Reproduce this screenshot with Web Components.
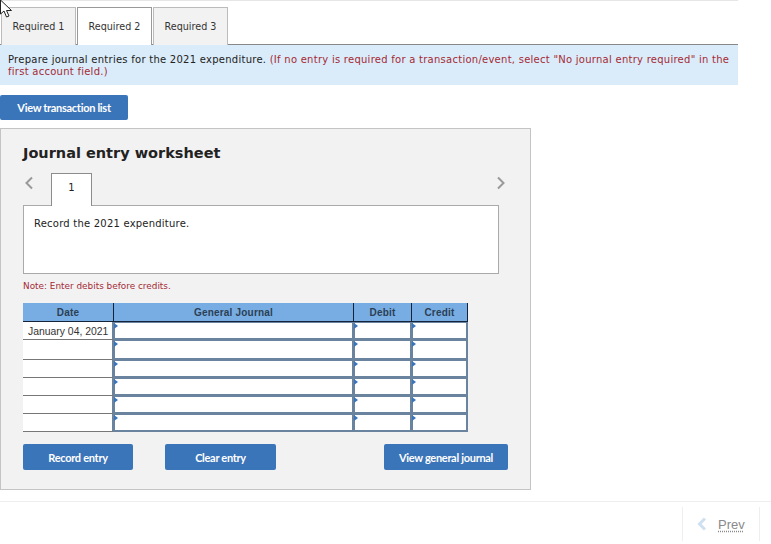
<!DOCTYPE html>
<html>
<head>
<meta charset="utf-8">
<style>
  html, body { margin: 0; background: #fff; }
  body { font-family: "DejaVu Sans", Verdana, sans-serif; font-size: 10px; color: #222; height: 544px; overflow: hidden; }
</style>
</head>
<body>
<homework-page></homework-page>

<script>
// Blue rounded action button
class ActionButton extends HTMLElement {
  connectedCallback() {
    this.attachShadow({ mode: 'open' }).innerHTML = `
      <style>
        :host { display: flex; align-items: center; justify-content: center; height: 26px; box-sizing: border-box;
          background: #3b75b9; border-radius: 2px; color: #fff; font: 700 11px Lato, sans-serif; letter-spacing: -.3px; }
      </style>
      <slot></slot>`;
  }
}
customElements.define('action-button', ActionButton);

// One of the Required tabs
class RequiredTab extends HTMLElement {
  connectedCallback() {
    this.attachShadow({ mode: 'open' }).innerHTML = `
      <style>
        :host { display: flex; align-items: center; justify-content: center; box-sizing: border-box; width: 75px; height: 38px;
          border: 1px solid #bbb; border-bottom: 0; background: #f2f2f2; color: #333; font-size: 9.6px; }
        :host([active]) { background: #fff; border-color: #999; }
      </style>
      <slot></slot>`;
  }
}
customElements.define('required-tab', RequiredTab);

class JournalTable extends HTMLElement {
  connectedCallback() {
    let cells = '';
    for (let i = 0; i < 6; i++) {
      cells += `<div class="date">${i == 0 ? 'January 04, 2021' : ''}</div>`;
      cells += '<div class="in"></div><div class="in"></div><div class="in"></div>';
    }
    this.attachShadow({ mode: 'open' }).innerHTML = `
      <style>
        :host { display: grid; grid-template-columns: 91px 240px 58px 56px; grid-template-rows: 19px 18px 20px 18px 18px 18px 18px; width: 445px;
          font: 10.4px "Liberation Sans", Arial, sans-serif; color: #333; }
        .head { box-sizing: border-box; background: #78ade3; border-bottom: 1px solid #16243a; border-right: 1px solid #16243a;
          display: flex; align-items: center; justify-content: center; font-weight: 700; font-size: 10px; color: #2b3f55; letter-spacing: .2px; }
        .date { background: #fff; border-bottom: 1px solid #777; border-right: 2px solid #6a84a0; box-sizing: border-box;
          display: flex; align-items: center; padding: 1px 0 0 5px; white-space: nowrap; }
        .in { position: relative; background: #fff; box-sizing: border-box; border: 2px solid #6a84a0; border-left-width: 1px; border-top-width: 1px; }
        .in::before { content: ""; position: absolute; left: -1px; top: 0; border-left: 4px solid #3b75b9;
          border-top: 3px solid transparent; border-bottom: 3px solid transparent; }
      </style>
      <div class="head">Date</div>
      <div class="head">General Journal</div>
      <div class="head">Debit</div>
      <div class="head">Credit</div>
      ${cells}`;
  }
}
customElements.define('journal-table', JournalTable);

// Grey worksheet panel
class EntryWorksheet extends HTMLElement {
  connectedCallback() {
    this.attachShadow({ mode: 'open' }).innerHTML = `
      <style>
        :host { display: block; box-sizing: border-box; width: 531px; height: 362px; background: #f2f2f2; border: 1px solid #c4c4c4; padding: 16px 22px 0; }
        h2 { margin: 0; font: 700 14.500px/17px "DejaVu Sans", Verdana, sans-serif; color: #222; }
        .pager { display: flex; align-items: flex-end; height: 33px; margin-top: 11px; margin-bottom: -1px; justify-content: space-between; width: 483px; }
        .left { display: flex; align-items: flex-end; }
        .arrow { width: 10px; height: 14px; margin-bottom: 16px; }
        .left .arrow { margin-left: 1px; }
        .step { width: 41px; height: 33px; box-sizing: border-box; margin-left: 17px; padding-bottom: 5px; position: relative; z-index: 1; background: #fff;
          border: 1px solid #8c8c8c; border-bottom: 0; display: flex; align-items: center; justify-content: center; color: #222; }
        .box { box-sizing: border-box; width: 476px; height: 69px; background: #fff; border: 1px solid #aaa; padding: 12px 10px; color: #222; letter-spacing: .22px; }
        .note { margin: 6px 0 11px; height: 12px; font: 8.900px/12px "DejaVu Sans", Verdana, sans-serif; color: #a52a35; }
        .actions { display: flex; width: 485px; margin-top: 12px; }
        .record { width: 110px; }
        .clear { width: 111px; margin-left: 32px; }
        .view { width: 124px; margin-left: auto; }
      </style>
      <h2>Journal entry worksheet</h2>
      <div class="pager">
        <div class="left">
          <svg class="arrow" viewBox="0 0 10 14"><path d="M8 1.500 2.500 7 8 12.500" fill="none" stroke="#999" stroke-width="2"/></svg>
          <div class="step">1</div>
        </div>
        <svg class="arrow" viewBox="0 0 10 14"><path d="M2 1.500 7.500 7 2 12.500" fill="none" stroke="#999" stroke-width="2"/></svg>
      </div>
      <div class="box">Record the 2021 expenditure.</div>
      <div class="note">Note: Enter debits before credits.</div>
      <journal-table></journal-table>
      <div class="actions">
        <action-button class="record">Record entry</action-button>
        <action-button class="clear">Clear entry</action-button>
        <action-button class="view">View general journal</action-button>
      </div>`;
  }
}
customElements.define('entry-worksheet', EntryWorksheet);

// Whole page
class HomeworkPage extends HTMLElement {
  connectedCallback() {
    this.attachShadow({ mode: 'open' }).innerHTML = `
      <style>
        :host { display: block; position: relative; width: 771px; height: 544px; }
        .top { width: 738px; border-top: 1px solid #e6e6e6; }
        .tabs { display: flex; gap: 1px; padding: 6px 0 0 1px; border-bottom: 1px solid #888; height: 37px; }
        .tabs required-tab { margin-bottom: -1px; }
        .info { box-sizing: border-box; height: 40px; background: #daecf9; padding: 9px 8px 0; line-height: 12px; letter-spacing: .26px; color: #222; white-space: nowrap; }
        .info span { color: #a52a35; }
        .list { width: 128px; height: 25px; margin: 10px 0 8px; }
        .foot { margin-top: 11px; border-top: 1px solid #eee; display: flex; justify-content: flex-end; padding: 5px 11px 0 0; }
        .prev { box-sizing: border-box; width: 78px; height: 34px; border-left: 1px solid #eee; border-right: 1px solid #eee;
          display: flex; align-items: center; padding-left: 14px; gap: 11px; }
        .prev svg { width: 10px; height: 14px; }
        .prev a { font: 13px "Liberation Sans", Arial, sans-serif; color: #8a8a8a; text-decoration: underline dotted; text-underline-offset: 2px; }
        .cursor { position: absolute; left: 0; top: 0; width: 13px; height: 20px; }
      </style>
      <div class="top">
        <div class="tabs">
          <required-tab>Required 1</required-tab>
          <required-tab active>Required 2</required-tab>
          <required-tab>Required 3</required-tab>
        </div>
        <div class="info">
          <div>Prepare journal entries for the 2021 expenditure. <span>(If no entry is required for a transaction/event, select "No journal entry required" in the</span></div>
          <div><span>first account field.)</span></div>
        </div>
      </div>
      <action-button class="list">View transaction list</action-button>
      <entry-worksheet></entry-worksheet>
      <div class="foot">
        <div class="prev">
          <svg viewBox="0 0 10 14"><path d="M8 1.500 2.500 7 8 12.500" fill="none" stroke="#cfe0f2" stroke-width="3"/></svg>
          <a>Prev</a>
        </div>
      </div>
      <svg class="cursor" viewBox="0 0 13 20"><path d="M.5 0v14l3.500-3 2.500 6 2.500-1-2.500-5.500h5z" fill="#fff" stroke="#222" stroke-width="1"/></svg>`;
  }
}
customElements.define('homework-page', HomeworkPage);
</script>
</body>
</html>
